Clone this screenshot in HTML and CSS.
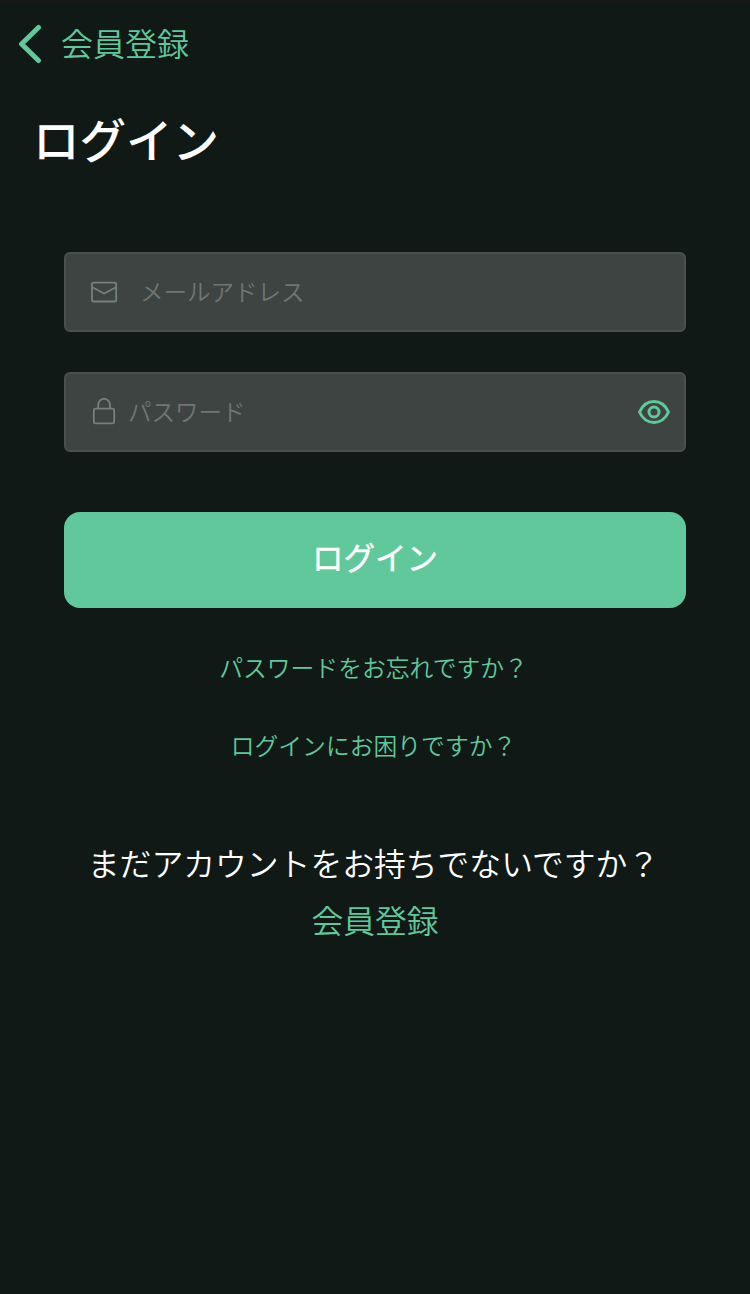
FILE: index.html
```html
<!DOCTYPE html>
<html lang="ja">
<head>
    <meta charset="UTF-8">
    <meta name="viewport" content="width=device-width, initial-scale=1.0">
    <title>ログイン</title>
    <link rel="stylesheet" href="styles.css">
</head>
<body>
    <header class="nav-bar">
        <a href="#" class="back-link">
            <svg class="back-icon" width="24" height="40" viewBox="0 0 24 40" fill="none" stroke="currentColor" stroke-width="5" stroke-linecap="round" stroke-linejoin="round">
                <path d="M20.500 3.500 3.500 20l17 16.500"/>
            </svg>
            <span>会員登録</span>
        </a>
    </header>

    <h1>ログイン</h1>

    <form class="login-form">
        <div class="field">
            <svg class="field-icon" width="28" height="28" viewBox="0 0 28 28" fill="none" stroke="currentColor" stroke-width="1.8" stroke-linejoin="round">
                <rect x="2" y="4.7" width="24.2" height="18.8" rx="1.6"/>
                <path d="m2.300 9.200 11.800 6.300L26 9.200"/>
            </svg>
            <input type="email" class="email-input" placeholder="メールアドレス">
        </div>
        <div class="field">
            <svg class="field-icon" width="28" height="28" viewBox="0 0 28 28" fill="none" stroke="currentColor" stroke-width="1.8" stroke-linejoin="round">
                <rect x="3.8" y="10.7" width="20.4" height="14.6" rx="1.8"/>
                <path d="M8.200 10.500V6.700a5.900 5.900 0 0 1 11.800 0v3.800"/>
            </svg>
            <input type="password" class="password-input" placeholder="パスワード">
            <svg class="eye-icon" width="34" height="28" viewBox="0 0 34 28" fill="none" stroke="currentColor" stroke-width="3" stroke-linejoin="round">
                <path d="M2.500 14C5.600 7.200 10.800 3.600 17 3.600S28.400 7.200 31.500 14C28.400 20.800 23.200 24.400 17 24.400S5.600 20.800 2.500 14Z"/>
                <circle cx="17" cy="14" r="5"/>
            </svg>
        </div>
        <button type="submit" class="login-btn">ログイン</button>
    </form>

    <div class="help-links">
        <a href="#">パスワードをお忘れですか？</a>
        <a href="#">ログインにお困りですか？</a>
    </div>

    <div class="signup">
        <p>まだアカウントをお持ちでないですか？</p>
        <a href="#">会員登録</a>
    </div>
</body>
</html>
```
FILE: styles.css
```css
* {
    box-sizing: border-box;
}
body {
    font-family: "Noto Sans CJK JP", sans-serif;
    font-weight: 350;
    margin: 0;
    min-height: 100vh;
    background-color: #101916;
    border-top: 1px solid #1b1715;
    color: #ffffff;
}
a {
    color: #60c89b;
    text-decoration: none;
}
.nav-bar {
    height: 86px;
    padding-left: 18px;
    display: flex;
    align-items: center;
}
.back-link {
    display: flex;
    align-items: center;
    gap: 19px;
    font-size: 32px;
    line-height: 40px;
}
.back-link span {
    padding-bottom: 4px;
}
h1 {
    margin: 0;
    padding: 18px 0 0 33px;
    font-size: 46.5px;
    font-weight: 500;
    line-height: 66px;
}
.login-form {
    padding: 81px 64px 0;
}
.field {
    display: flex;
    align-items: center;
    height: 80px;
    margin-bottom: 40px;
    padding: 0 13px 0 24px;
    background-color: #3d4441;
    border: 2px solid #48514e;
    border-radius: 6px;
}
.field-icon {
    flex: none;
    color: #75817d;
}
.field input {
    flex: 1;
    min-width: 0;
    height: 40px;
    padding: 0 0 3px;
    border: none;
    outline: none;
    background: none;
    color: #ffffff;
    font-family: inherit;
    font-size: 23.5px;
    font-weight: 350;
}
.field .email-input {
    margin-left: 22px;
}
.field .password-input {
    margin-left: 10px;
}
.field input::placeholder {
    color: #707675;
}
.eye-icon {
    flex: none;
    color: #60c89b;
}
.login-btn {
    display: block;
    width: 100%;
    height: 96px;
    margin-top: 60px;
    padding: 0 0 8px;
    border: none;
    border-radius: 16px;
    background-color: #60c89b;
    color: #ffffff;
    font-family: inherit;
    font-size: 31.5px;
    font-weight: 400;
    -webkit-text-stroke: 0.4px #ffffff;
    cursor: pointer;
}
.help-links {
    display: flex;
    flex-direction: column;
    align-items: center;
    gap: 38px;
    padding: 39px 3px 0 0;
    font-size: 23.8px;
    line-height: 40px;
}
.signup {
    padding: 73px 3px 0 0;
    text-align: center;
    font-size: 31.8px;
    line-height: 48px;
}
.signup p {
    margin: 0 0 9px;
}
.signup a {
    padding-left: 3px;
}
```
